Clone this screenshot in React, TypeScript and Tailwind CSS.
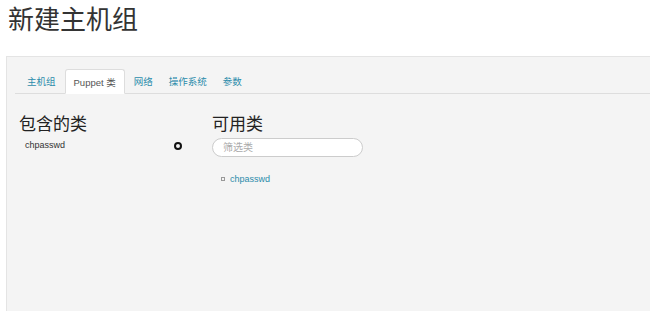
// New host group page - Puppet classes tab
import React from "react";

const tabs = ["主机组", "Puppet 类", "网络", "操作系统", "参数"];
const font = { fontFamily: '"Liberation Sans", "Noto Sans CJK SC", sans-serif' };

export default function App() {
  return (
    <div className="w-[650px] h-[311px] overflow-hidden bg-white text-[#333]" style={font}>
      {/* Page title */}
      <h1 className="h-[56px] pl-[8px] pt-[3px] text-[26px] leading-[34px] text-[#333]">新建主机组</h1>

      {/* Panel */}
      <div className="ml-[6px] h-[255px] bg-[#f4f4f4] border-t border-l border-[#e4e4e4] pt-[12px]">
        {/* Tabs */}
        <ul className="flex ml-[8px] pl-[5px] border-b border-[#dddddd] h-[25px]">
          {tabs.map((t) => (
            <li key={t} className="mr-[2px]">
              {t === "Puppet 类" ? (
                <span className="block h-[25px] px-[8px] leading-[25px] text-[9.5px] bg-white border border-[#dddddd] border-b-white rounded-t-[3px] text-[#555]">
                  {t}
                </span>
              ) : (
                <span className="block h-[24px] px-[7px] leading-[25px] text-[9.5px] text-[#2c8cab]">{t}</span>
              )}
            </li>
          ))}
        </ul>

        {/* Class columns */}
        <div className="flex pl-[12px] pt-[20px]">
          <div className="w-[193px]">
            <h3 className="text-[17px] leading-[22px] text-[#222]">包含的类</h3>
            <div className="flex items-center mt-[3px] pl-[6px] h-[14px]">
              <span className="text-[9px] text-[#333] flex-1">chpasswd</span>
              <span className="mr-[30px] w-[8px] h-[8px] rounded-full border-2 border-[#111]"></span>
            </div>
          </div>
          <div>
            <h3 className="text-[17px] leading-[22px] text-[#222]">可用类</h3>
            <div className="mt-[2px] w-[151px] h-[19px] rounded-full border border-[#cccccc] bg-white pl-[10px] text-[10px] leading-[17px] text-[#aaa]">
              筛选类
            </div>
            <ul className="mt-[15px] pl-[9px]">
              <li className="flex items-center gap-[5px] text-[9px] leading-[14px]">
                <span className="w-[4px] h-[4px] border border-[#999]"></span>
                <span className="text-[#2c8cab]">chpasswd</span>
              </li>
            </ul>
          </div>
        </div>
      </div>
    </div>
  );
}
